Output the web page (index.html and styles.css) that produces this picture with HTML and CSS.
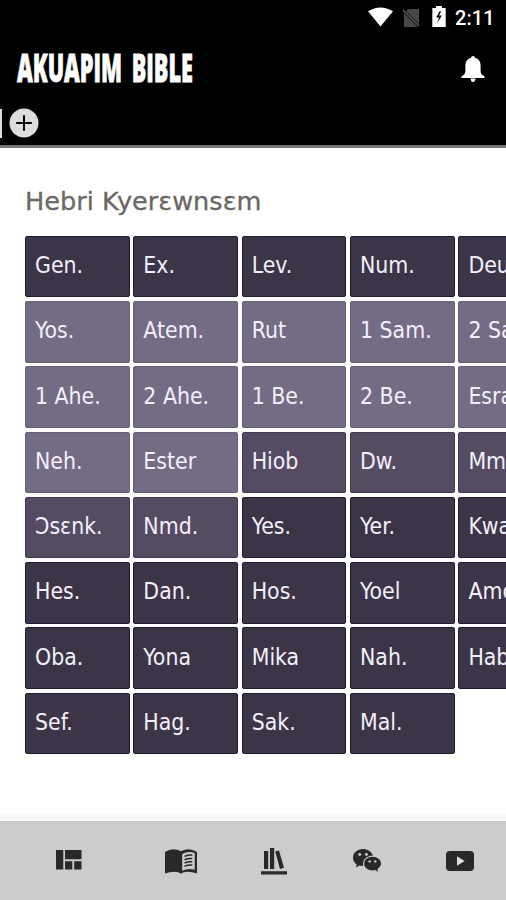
FILE: index.html
```html
<!DOCTYPE html>
<html lang="ak">
<head>
<meta charset="utf-8">
<title>Akuapim Bible</title>
<link rel="stylesheet" href="styles.css">
</head>
<body>
<div class="app">
  <header class="top">
    <div class="status">
      <svg class="wifi" viewBox="0 0 26 20"><path d="M0 4Q13-4 26 4L13 20Z"/></svg>
      <svg class="sim" viewBox="0 0 18 20"><path d="M6 1H17V16L4 3ZM2 5L15 18V19H2Z" fill="#484848"/><path d="M1 2L17 18" stroke="#606060" stroke-width="1.5"/></svg>
      <svg class="battery" viewBox="0 0 14 22"><path d="M4 0H10V2H14V22H0V2H4Z"/><path d="M8 5L4 12H7L5 18L10 10H7L9 6Z" fill="#000"/></svg>
      <span class="clock">2:11</span>
    </div>
    <div class="brand">
      <svg class="title" viewBox="0 0 180 40"><text x="1" y="33" textLength="176" lengthAdjust="spacingAndGlyphs">AKUAPIM BIBLE</text></svg>
      <svg class="bell" viewBox="0 0 24 26"><path d="M12 0C10.8 0 10.2.8 10.2 1.8C6 2.7 4.4 6 4.4 10V15C4.4 18 2.6 19.4.4 20.4V22H23.6V20.4C21.4 19.4 19.6 18 19.6 15V10C19.6 6 18 2.7 13.8 1.8C13.8.8 13.2 0 12 0ZM9.4 22.5H14.6Q14 26 12 26Q10 26 9.4 22.5Z"/></svg>
    </div>
    <div class="tabs">
      <span class="tab-edge"></span>
      <svg class="add" viewBox="0 0 30 30"><circle cx="15" cy="15" r="14.5" fill="#ddd"/><path d="M7.2 15H22.8M15 7.2V22.8" stroke="#000" stroke-width="2"/></svg>
    </div>
  </header>
  <main class="content">
    <h1>Hebri Kyerɛwnsɛm</h1>
    <div class="books">
      <a class="law">Gen.</a><a class="law">Ex.</a><a class="law">Lev.</a><a class="law">Num.</a><a class="law">Deu.</a>
      <a class="history">Yos.</a><a class="history">Atem.</a><a class="history">Rut</a><a class="history">1 Sam.</a><a class="history">2 Sam.</a>
      <a class="history">1 Ahe.</a><a class="history">2 Ahe.</a><a class="history">1 Be.</a><a class="history">2 Be.</a><a class="history">Esra</a>
      <a class="history">Neh.</a><a class="history">Ester</a><a class="poetry">Hiob</a><a class="poetry">Dw.</a><a class="poetry">Mmɛ.</a>
      <a class="poetry">Ɔsɛnk.</a><a class="poetry">Nmd.</a><a class="prophets">Yes.</a><a class="prophets">Yer.</a><a class="prophets">Kwa.</a>
      <a class="prophets">Hes.</a><a class="prophets">Dan.</a><a class="prophets">Hos.</a><a class="prophets">Yoel</a><a class="prophets">Amos</a>
      <a class="prophets">Oba.</a><a class="prophets">Yona</a><a class="prophets">Mika</a><a class="prophets">Nah.</a><a class="prophets">Hab.</a>
      <a class="prophets">Sef.</a><a class="prophets">Hag.</a><a class="prophets">Sak.</a><a class="prophets">Mal.</a>
    </div>
  </main>
  <nav class="bottom">
    <svg class="grid-icon" viewBox="0 0 26 20"><path d="M0 0H7.3V19.5H0ZM9 0H25.5V9.3H9ZM9 11.3H16.3V19.5H9ZM18.2 11.3H25.5V19.5H18.2Z"/></svg>
    <svg class="book-icon" viewBox="0 0 32 25"><path d="M0 3Q8-2 16 2.2Q24-2 32 3V24.5Q24 21.5 18 23.5Q16 25.5 14 23.5Q8 21.5 0 24.5Z"/><path d="M17.2 5Q23 1.5 29.7 4V20.8Q23 19 17.2 21.8Z" fill="#ccc"/><path d="M19.5 7.5Q23 5.7 27.3 6.2M19.5 10.8Q23 9 27.3 9.5M19.5 14.1Q23 12.3 27.3 12.8M19.5 17.4Q23 15.6 27.3 16.1" fill="none" stroke="#292929" stroke-width="1.5"/></svg>
    <svg class="shelf-icon" viewBox="0 0 26 27"><path d="M3 3H7.2V21H3ZM9 0H13.2V21H9ZM14.2 3.6L18 2.5L23 19.7L19 21ZM0 23.2H26V26.5H0Z"/></svg>
    <svg class="chat-icon" viewBox="0 0 28 23"><path d="M10 0C4.5 0 0 3.7 0 8.4C0 11.5 1.5 13.8 3.7 15.4L2.8 18.5L6.5 16.5Q8.5 17.1 10.2 16.8C9 10.4 13.5 7 20 6.4C18.5 2.5 14.5 0 10 0Z"/><path d="M19.5 7.8C14.8 7.8 11.2 11 11.2 14.8C11.2 18.7 14.8 21.5 19.5 21.5L22.1 21.1L25.2 22.8L24.4 20C26.6 18.6 28 16.9 28 14.8C28 11 24.2 7.8 19.5 7.8Z"/><g fill="#ccc"><circle cx="6.7" cy="5.5" r="1.4"/><circle cx="13.4" cy="5.5" r="1.4"/><circle cx="16.7" cy="12.4" r="1.2"/><circle cx="22.3" cy="12.4" r="1.2"/></g></svg>
    <svg class="video-icon" viewBox="0 0 28 20"><rect width="28" height="20" rx="4"/><path d="M11 5.3L18.7 10L11 14.7Z" fill="#ddd"/></svg>
  </nav>
</div>
</body>
</html>
```
FILE: styles.css
```css
* { box-sizing: border-box; }
body { margin: 0; background: #fff; font-family: "DejaVu Sans", sans-serif; }
.app { width: 506px; height: 900px; display: flex; flex-direction: column; overflow: hidden; }
svg { display: block; flex: none; }
.top { height: 148px; background: #000; border-bottom: 3px solid #777; flex: none; }
.status { height: 36px; display: flex; align-items: center; padding-left: 368px; fill: #fff; }
.wifi { width: 25px; height: 20px; margin-top: -2px; }
.sim { width: 18px; height: 20px; margin-left: 9px; margin-top: -1px; }
.battery { width: 14px; height: 21px; margin-left: 12px; margin-top: -3px; }
.clock { margin-left: 9px; color: #fff; font: 500 20px/36px Roboto, sans-serif; letter-spacing: .1px; }
.brand { height: 66px; padding: 0 21px 0 16px; display: flex; align-items: center; justify-content: space-between; }
.title { width: 180px; height: 40px; overflow: visible; }
.title text { font: 800 38px "Open Sans", sans-serif; word-spacing: 7px; fill: #fff; stroke: #fff; stroke-width: .8px; }
.bell { width: 24px; height: 26px; fill: #fff; }
.tabs { height: 42px; display: flex; align-items: center; }
.tab-edge { width: 2px; height: 29px; background: #ddd; }
.add { width: 30px; height: 30px; margin-left: 7px; }
.content { flex: 1; padding: 36px 0 0 25px; overflow: hidden; }
h1 { margin: 0; height: 52px; font-size: 25.6px; font-weight: 400; line-height: 35px; color: #6b6762; -webkit-text-stroke: .3px #6b6762; }
.books { width: 538.1px; display: grid; grid-template-columns: repeat(5, 104.5px); grid-auto-rows: 61.4px; gap: 3.85px; }
.books a { padding: 0 10px 3px 9px; display: flex; align-items: center; color: #f3effb; font-family: "DejaVu Sans Condensed", "DejaVu Sans", sans-serif; font-stretch: condensed; font-size: 22.8px; border: 1px solid; border-radius: 2px; white-space: nowrap; }
.books .law, .books .prophets { background: #3c3447; border-color: #211a32; }
.books .history { background: #746b84; border-color: #685e7b; }
.books .poetry { background: #554b63; border-color: #43384f; }
.bottom { height: 79px; flex: none; display: flex; align-items: center; background: #ccc; border-top: 1px solid #c3c3c3; box-shadow: 0 -6px 0 #f9f9f9; fill: #292929; padding-left: 56px; }
.grid-icon { width: 26px; height: 20px; margin-top: -2px; }
.book-icon { width: 32px; height: 25px; margin-left: 83px; }
.shelf-icon { width: 26px; height: 27px; margin-left: 64px; }
.chat-icon { width: 28px; height: 23px; margin-left: 66px; margin-top: -1px; }
.video-icon { width: 28px; height: 20px; margin-left: 65px; margin-top: -1px; }
```
